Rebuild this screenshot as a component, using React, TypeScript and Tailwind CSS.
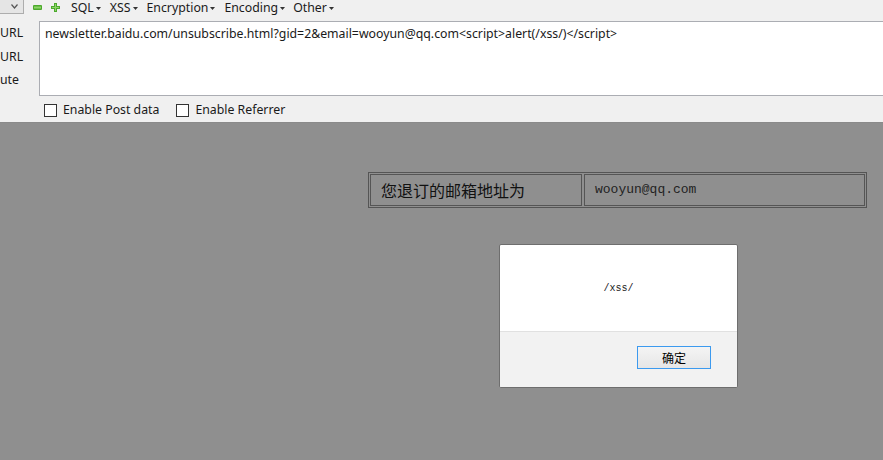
import React from "react";

const Caret = () => (
  <svg width="5" height="3" viewBox="0 0 5 3" className="ml-[2px] mt-[2px]">
    <path d="M0 0h5L2.5 3z" fill="#333" />
  </svg>
);

export default function App() {
  const ui = { fontFamily: '"Noto Sans", "Open Sans", sans-serif' };
  return (
    <div className="w-[883px] h-[460px] overflow-hidden flex flex-col bg-[#8f8f8f]" style={ui}>
      <div className="h-[123px] shrink-0 bg-[#f0f0f0] border-b border-[#8a8a8a] flex flex-col text-[12.3px] text-[#1a1a1a]">
        {/* toolbar row */}
        <div className="h-[21px] flex items-start">
          <div className="w-[24px] h-[15px] -mt-[1px] bg-[#e5e5e5] border border-[#adadad] border-l-0 flex items-center justify-end pr-[5px]">
            <svg width="7" height="5" viewBox="0 0 7 5">
              <path d="M0.5 0.5L3.5 4L6.5 0.5" stroke="#555" strokeWidth="1.2" fill="none" />
            </svg>
          </div>
          <div className="flex items-center h-[14px] ml-[9px]">
            <svg width="9" height="5" viewBox="0 0 9 5">
              <rect x="0" y="0" width="9" height="5" rx="1" fill="#4caa2d" />
              <rect x="1" y="1.5" width="7" height="2" fill="#8fd46a" />
            </svg>
            <svg width="9" height="9" viewBox="0 0 9 9" className="ml-[9px]">
              <path d="M3 0h3v3h3v3H6v3H3V6H0V3h3z" fill="#4caa2d" />
              <path d="M4 1h1v3h3v1H5v3H4V5H1V4h3z" fill="#8fd46a" />
            </svg>
          </div>
          <div className="flex items-center h-[15px] ml-[11px] leading-[15px]">
            <span className="flex items-center">SQL<Caret /></span>
            <span className="flex items-center ml-[9px]">XSS<Caret /></span>
            <span className="flex items-center ml-[9px]">Encryption<Caret /></span>
            <span className="flex items-center ml-[9px]">Encoding<Caret /></span>
            <span className="flex items-center ml-[8px]">Other<Caret /></span>
          </div>
        </div>
        {/* url area */}
        <div className="flex h-[75px]">
          <div className="w-[39px] flex flex-col leading-none pt-[1px]">
            <div className="h-[23px] flex items-center">URL</div>
            <div className="h-[24px] flex items-center">URL</div>
            <div className="h-[23px] flex items-center">ute</div>
          </div>
          <div className="flex-1 bg-white border border-r-0 border-[#abadb3] pl-[5px] pt-[3px] leading-[18px] whitespace-nowrap">
            newsletter.baidu.com/unsubscribe.html?gid=2&amp;email=wooyun@qq.com&lt;script&gt;alert(/xss/)&lt;/script&gt;
          </div>
        </div>
        {/* checkboxes */}
        <div className="flex items-center h-[26px] pl-[44px] pt-[3px]">
          <span className="w-[13px] h-[13px] border border-[#333] bg-white" />
          <span className="ml-[6px]">Enable Post data</span>
          <span className="w-[13px] h-[13px] border border-[#333] bg-white ml-[17px]" />
          <span className="ml-[6px]">Enable Referrer</span>
        </div>
      </div>

      {/* page content */}
      <div className="flex-1 flex flex-col">
        <div className="flex pl-[368px] pt-[49px]">
          <div className="w-[499px] h-[36px] border border-[#555] p-[1px] flex gap-[2px]">
            <div className="w-[212px] border border-[#555] flex items-center pl-[10px] text-[16px] text-[#111]" style={{ fontFamily: '"Noto Sans CJK SC", sans-serif' }}>
              您退订的邮箱地址为
            </div>
            <div className="flex-1 border border-[#555] flex items-center pl-[10px] text-[13px] text-[#222]" style={{ fontFamily: '"Liberation Mono", monospace' }}>
              wooyun@qq.com
            </div>
          </div>
        </div>
        <div className="flex pl-[499px] pt-[36px]">
          <div className="w-[239px] h-[144px] border border-[#6e6e6e] rounded-[2px] overflow-hidden flex flex-col bg-white">
            <div className="h-[86px] flex items-center justify-center text-[10px] text-[#222]" style={{ fontFamily: '"Liberation Mono", monospace' }}>
              /xss/
            </div>
            <div className="flex-1 bg-[#f2f2f2] border-t border-[#e1e1e1] flex justify-end pr-[26px] pt-[14px]">
              <div className="w-[74px] h-[23px] border border-[#3c9aef] bg-gradient-to-b from-[#f4f4f4] to-[#e6e6e6] flex items-center justify-center text-[12px] text-black" style={{ fontFamily: '"Noto Sans CJK SC", sans-serif' }}>
                确定
              </div>
            </div>
          </div>
        </div>
      </div>
    </div>
  );
}
